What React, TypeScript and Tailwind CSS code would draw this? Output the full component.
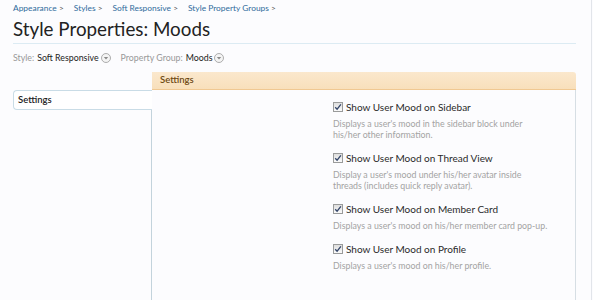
import React from 'react';

const crumbs = ['Appearance', 'Styles', 'Soft Responsive', 'Style Property Groups'];

const options = [
  {
    label: 'Show User Mood on Sidebar',
    lines: ["Displays a user's mood in the sidebar block under", 'his/her other information.'],
  },
  {
    label: 'Show User Mood on Thread View',
    lines: ["Display a user's mood under his/her avatar inside", 'threads (includes quick reply avatar).'],
  },
  {
    label: 'Show User Mood on Member Card',
    lines: ["Displays a user's mood on his/her member card pop-up."],
  },
  {
    label: 'Show User Mood on Profile',
    lines: ["Displays a user's mood on his/her profile."],
  },
];

const DropArrow = () => (
  <svg width="10" height="10" viewBox="0 0 10 10" className="ml-[2px] shrink-0">
    <circle cx="5" cy="5" r="4.5" fill="#f4f4f4" stroke="#9a9a9a" strokeWidth="0.8" />
    <path d="M2.8 4 L7.2 4 L5 6.6 Z" fill="#8a8a8a" />
  </svg>
);

const CheckBox = () => (
  <span className="w-[10px] h-[10px] shrink-0 border border-[#9a9b9b] bg-gradient-to-b from-[#dedede] to-[#fbfbfb] flex items-center justify-center">
    <svg width="8" height="8" viewBox="0 0 8 8">
      <path d="M1.2 4.2 L3.1 6.2 L6.9 1.4" fill="none" stroke="#34466a" strokeWidth="1.3" />
    </svg>
  </span>
);

export default function App() {
  return (
    <div className="w-[593px] h-[300px] overflow-hidden bg-[#fcfcfe] font-['Lato',_'Liberation_Sans',_sans-serif]">
      <div className="w-[592px] h-full border-r border-[#e2e5ea] pl-[13px] pr-[15px] pt-[2px]">
        {/* breadcrumb */}
        <div className="flex items-center h-[12px] text-[8.4px] leading-[12px] text-[#2f6b9c]">
          {crumbs.map((c) => (
            <span key={c} className="mr-[10px]">
              {c} <span className="text-[#555]">&gt;</span>
            </span>
          ))}
        </div>

        <h1 className="mt-[3px] text-[18.8px] leading-[24px] text-[#222]">Style Properties: Moods</h1>
        <div className="mt-[2px] h-px bg-[#dcebf3]" />

        {/* style / group selectors */}
        <div className="mt-[8px] flex items-center h-[12px] text-[8.8px] leading-[12px]">
          <span className="text-[#999]">Style:</span>
          <span className="ml-[3px] text-[#222]">Soft Responsive</span>
          <DropArrow />
          <span className="ml-[10px] text-[#999]">Property Group:</span>
          <span className="ml-[3px] text-[#222]">Moods</span>
          <DropArrow />
        </div>

        {/* tabs + panel */}
        <div className="mt-[8px] flex h-[240px]">
          <div className="w-[139px] flex flex-col">
            <div className="h-[18px]" />
            <div className="h-[20px] border border-r-0 border-[#c9dce6] rounded-l-[4px] bg-white pl-[4px] flex items-center text-[9.5px] font-semibold text-[#222]">
              Settings
            </div>
            <div className="flex-1 border-r border-[#c3d3dc]" />
          </div>

          <div className="flex-1 flex flex-col">
            <div className="h-[18px] rounded-tr-[3px] bg-gradient-to-b from-[#fbe8cd] to-[#f8dfbb] border-b border-[#f0c892] pl-[8px] flex items-center text-[9.5px] font-semibold text-[#6e4a14]">
              Settings
            </div>
            <div className="flex-1 border-r border-[#d6dee4] pt-[10px] pl-[181px]">
              {options.map((o) => (
                <div key={o.label} className="mb-[11px]">
                  <div className="flex items-center h-[14px] gap-[3px] text-[10px] leading-[14px] text-[#2a2a2a]">
                    <CheckBox />
                    <span>{o.label}</span>
                  </div>
                  <div className="mt-[4px] text-[8.8px] leading-[11px] text-[#a3a3a3]">
                    {o.lines.map((l) => (
                      <div key={l}>{l}</div>
                    ))}
                  </div>
                </div>
              ))}
            </div>
          </div>
        </div>
      </div>
    </div>
  );
}
